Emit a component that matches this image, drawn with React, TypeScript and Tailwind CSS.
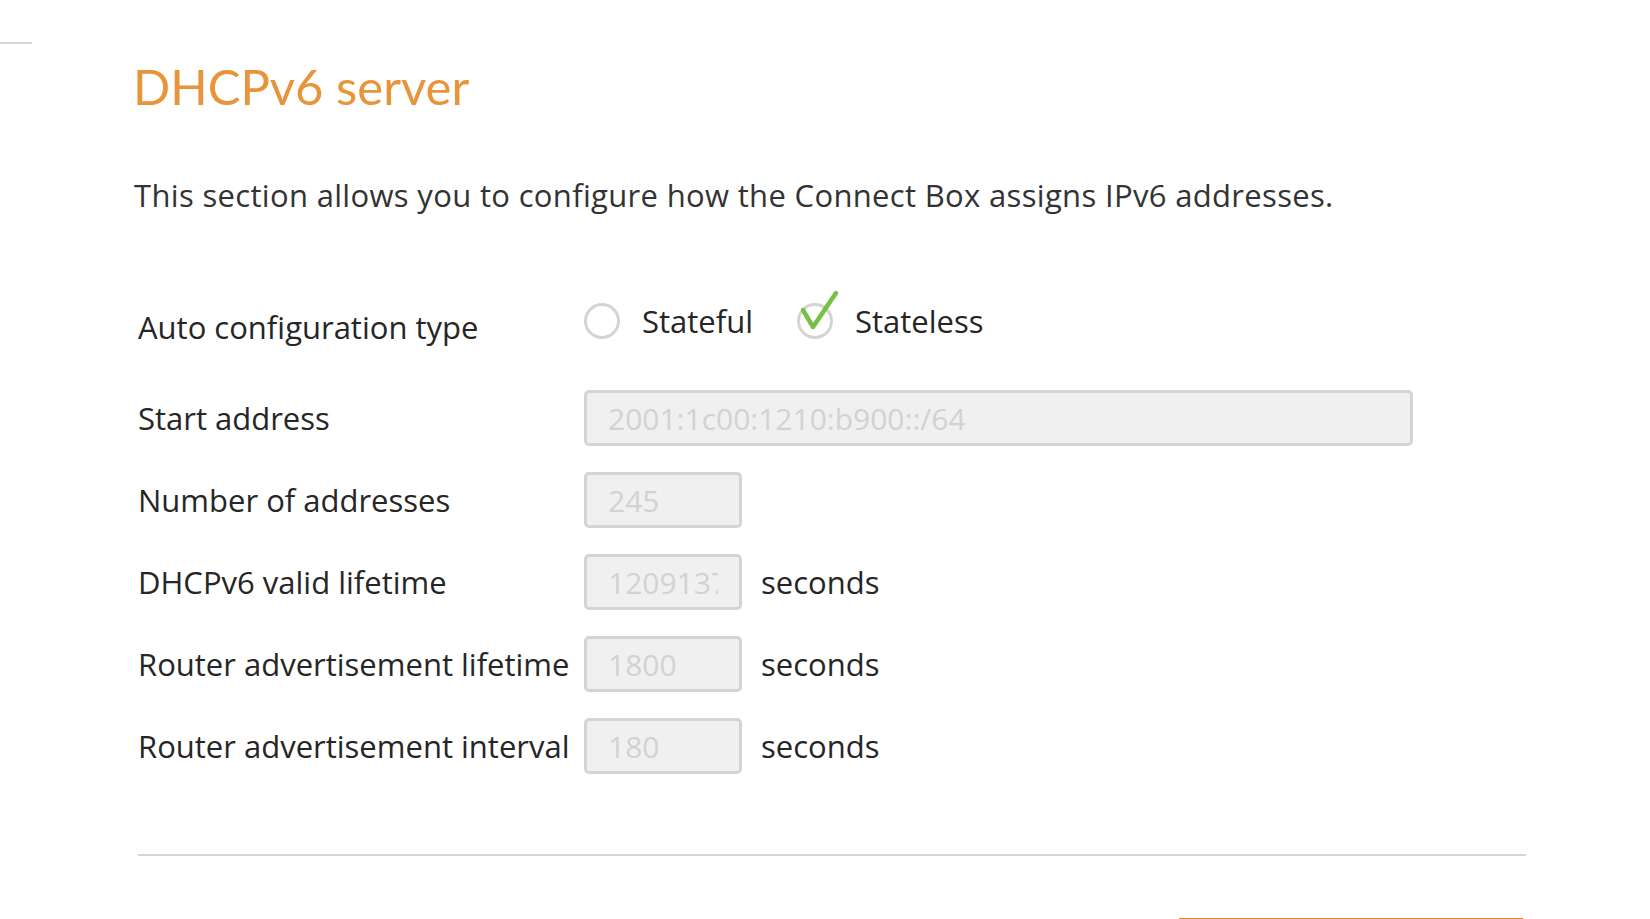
import React, { useState } from 'react';

type Row = { label: string; value: string; wide?: boolean; unit?: string };

const rows: Row[] = [
  { label: 'Start address', value: '2001:1c00:1210:b900::/64', wide: true },
  { label: 'Number of addresses', value: '245' },
  { label: 'DHCPv6 valid lifetime', value: '1209137', unit: 'seconds' },
  { label: 'Router advertisement lifetime', value: '1800', unit: 'seconds' },
  { label: 'Router advertisement interval', value: '180', unit: 'seconds' },
];

const Radio: React.FC<{ checked: boolean; label: string; onClick: () => void }> = ({ checked, label, onClick }) => (
  <button onClick={onClick} className="flex items-center gap-[22px] text-[#262626]">
    <span className="relative w-[36px] h-[36px]">
      <span className="absolute inset-0 rounded-full border-[3px] border-[#d4d4d4] blur-[0.6px]" />
      {checked && (
        <svg viewBox="0 0 44 44" className="absolute left-0 -top-[14px] w-[44px] h-[44px]">
          <path d="M6 21 L16 38 L39 4" fill="none" stroke="#77c043" strokeWidth="4.5" strokeLinecap="round" strokeLinejoin="round" />
        </svg>
      )}
    </span>
    <span className="text-[31px] leading-[40px]">{label}</span>
  </button>
);

const App: React.FC = () => {
  const [mode, setMode] = useState<'stateful' | 'stateless'>('stateless');

  return (
    <div className="h-screen bg-white font-['Open_Sans','Lato',sans-serif] overflow-hidden">
      <div className="pt-[42px]">
        <div className="w-8 h-[2px] bg-[#d6d6d6]" />
      </div>
      <div className="pl-[135px] pr-[124px]">
        <h1 className="mt-[14px] -ml-[2px] font-['Lato',sans-serif] text-[49px] leading-[56px] text-[#e8943a]">DHCPv6 server</h1>
        <p className="mt-[61px] -ml-[1px] text-[31px] leading-[40px] tracking-[0.33px] text-[#333333]">
          This section allows you to configure how the Connect Box assigns IPv6 addresses.
        </p>

        <div className="mt-[80px] pl-[3px] flex items-center">
          <div className="w-[446px] text-[31px] leading-[40px] text-[#262626] pt-[12px]">Auto configuration type</div>
          <div className="flex items-center gap-[44px]">
            <Radio checked={mode === 'stateful'} label="Stateful" onClick={() => setMode('stateful')} />
            <Radio checked={mode === 'stateless'} label="Stateless" onClick={() => setMode('stateless')} />
          </div>
        </div>

        <div className="mt-[43px] pl-[3px] flex flex-col gap-[26px]">
          {rows.map((r) => (
            <div key={r.label} className="flex items-center">
              <div className="w-[446px] text-[31px] leading-[40px] text-[#262626] whitespace-nowrap">{r.label}</div>
              <input
                disabled
                value={r.value}
                readOnly
                className={`${r.wide ? 'w-[829px]' : 'w-[158px]'} h-[56px] rounded-[5px] border-[3px] border-[#d4d4d4] bg-[#f0f0f0] px-[21px] text-[30px] text-[#d2d2d2] outline-none`}
              />
              {r.unit && <span className="ml-[19px] text-[31px] leading-[40px] text-[#262626]">{r.unit}</span>}
            </div>
          ))}
        </div>

        <div className="mt-[80px] ml-[3px] h-[2px] bg-[#d4d4d4]" />
        <div className="flex justify-end pr-[3px]">
          <button className="mt-[62px] w-[344px] h-[48px] border-t-2 border-[#e8892a] bg-white" />
        </div>
      </div>
    </div>
  );
};

export default App;
